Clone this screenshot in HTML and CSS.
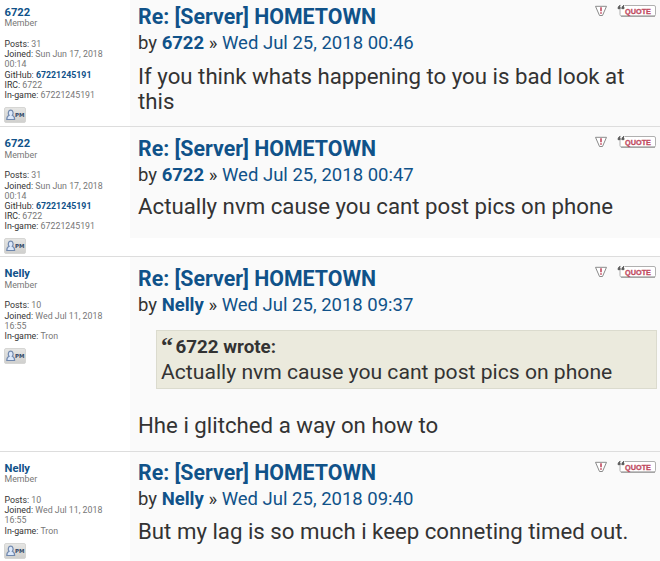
FILE: index.html
```
<!DOCTYPE html>
<html lang="en">
<head>
<meta charset="utf-8">
<title>Topic</title>
<link rel="stylesheet" href="styles.css">
</head>
<body>
<svg class="defs" width="0" height="0" aria-hidden="true">
  <linearGradient id="shade" x1="0" y1="0" x2="0" y2="1"><stop offset="0" stop-color="#e6e6e4"/><stop offset="1" stop-color="#cfcfcd"/></linearGradient>
  <symbol id="pm" viewBox="0 0 22 16">
    <rect x=".5" y=".5" width="21" height="15" rx="1.500" fill="url(#shade)" stroke="#d6d6d4"/>
    <path d="M2.800 12.500c0-2.300.9-3.700 2.300-4.200C3.500 6.500 4.300 3.200 6.700 3.200s3.200 3.300 1.600 5.100c1.400.5 2.300 1.900 2.300 4.200z" fill="#dce8fa" stroke="#7088ae" stroke-width="1.200"/>
  </symbol>
  <symbol id="report" viewBox="0 0 14 12">
    <path d="M1.500 1.300h11L8.500 10.500h-3z" fill="#fff" stroke="#8a8a8a" stroke-linejoin="round"/>
    <path d="M7 2.300v4M7 7.300v1.500" stroke="#c04a60" stroke-width="1.600"/>
  </symbol>
  <symbol id="quote" viewBox="0 0 40 14">
    <rect x="3" y="1.500" width="35.500" height="10.500" rx="1.500" fill="#fff" stroke="#b0b0b0"/>
    <path d="M4 12.200h34" stroke="#909090"/>
    <path d="M0 0h8v5H0z" fill="#fafafa"/>
    <path d="M3.200 1.300C1.700 2 1 3 1 4.700h2.200V3.200h-.8zM7 1.300C5.500 2 4.800 3 4.800 4.700H7V3.200h-.8z" fill="#555" stroke="#555" stroke-width=".8"/>
  </symbol>
</svg>
<main>
  <article class="post p1">
    <aside>
      <a class="user">6722</a><div class="rank">Member</div>
      <div class="facts"><div><b>Posts:</b> 31</div><div><b>Joined:</b> Sun Jun 17, 2018 00:14</div><div><b>GitHub:</b> <a>67221245191</a></div><div><b>IRC:</b> 6722</div><div><b>In-game:</b> 67221245191</div></div>
      <svg class="pm"><use href="#pm"/><text x="11" y="10" class="pm-text">PM</text></svg>
    </aside>
    <section>
      <header><h3>Re: [Server] HOMETOWN</h3><nav><svg class="report"><use href="#report"/></svg><svg class="quote"><use href="#quote"/><text x="8" y="10" class="quote-text" textLength="26" lengthAdjust="spacingAndGlyphs">QUOTE</text></svg></nav></header>
      <p class="author">by <b>6722</b> » <a>Wed Jul 25, 2018 00:46</a></p>
      <p class="content">If you think whats happening to you is bad look at<br>this</p>
    </section>
  </article>
  <article class="post p2">
    <aside>
      <a class="user">6722</a><div class="rank">Member</div>
      <div class="facts"><div><b>Posts:</b> 31</div><div><b>Joined:</b> Sun Jun 17, 2018 00:14</div><div><b>GitHub:</b> <a>67221245191</a></div><div><b>IRC:</b> 6722</div><div><b>In-game:</b> 67221245191</div></div>
      <svg class="pm"><use href="#pm"/><text x="11" y="10" class="pm-text">PM</text></svg>
    </aside>
    <section>
      <header><h3>Re: [Server] HOMETOWN</h3><nav><svg class="report"><use href="#report"/></svg><svg class="quote"><use href="#quote"/><text x="8" y="10" class="quote-text" textLength="26" lengthAdjust="spacingAndGlyphs">QUOTE</text></svg></nav></header>
      <p class="author">by <b>6722</b> » <a>Wed Jul 25, 2018 00:47</a></p>
      <p class="content">Actually nvm cause you cant post pics on phone</p>
    </section>
  </article>
  <article class="post p3">
    <aside>
      <a class="user">Nelly</a><div class="rank">Member</div>
      <div class="facts"><div><b>Posts:</b> 10</div><div><b>Joined:</b> Wed Jul 11, 2018 16:55</div><div><b>In-game:</b> Tron</div></div>
      <svg class="pm"><use href="#pm"/><text x="11" y="10" class="pm-text">PM</text></svg>
    </aside>
    <section>
      <header><h3>Re: [Server] HOMETOWN</h3><nav><svg class="report"><use href="#report"/></svg><svg class="quote"><use href="#quote"/><text x="8" y="10" class="quote-text" textLength="26" lengthAdjust="spacingAndGlyphs">QUOTE</text></svg></nav></header>
      <p class="author">by <b>Nelly</b> » <a>Wed Jul 25, 2018 09:37</a></p>
      <blockquote><cite><span class="mark">“</span>6722 wrote:</cite><p>Actually nvm cause you cant post pics on phone</p></blockquote>
      <p class="content reply">Hhe i glitched a way on how to</p>
    </section>
  </article>
  <article class="post p4">
    <aside>
      <a class="user">Nelly</a><div class="rank">Member</div>
      <div class="facts"><div><b>Posts:</b> 10</div><div><b>Joined:</b> Wed Jul 11, 2018 16:55</div><div><b>In-game:</b> Tron</div></div>
      <svg class="pm"><use href="#pm"/><text x="11" y="10" class="pm-text">PM</text></svg>
    </aside>
    <section>
      <header><h3>Re: [Server] HOMETOWN</h3><nav><svg class="report"><use href="#report"/></svg><svg class="quote"><use href="#quote"/><text x="8" y="10" class="quote-text" textLength="26" lengthAdjust="spacingAndGlyphs">QUOTE</text></svg></nav></header>
      <p class="author">by <b>Nelly</b> » <a>Wed Jul 25, 2018 09:40</a></p>
      <p class="content">But my lag is so much i keep conneting timed out.</p>
    </section>
  </article>
</main>
</body>
</html>
```
FILE: styles.css
```
* { box-sizing: border-box; }
body { margin: 0; background: #fff; color: #333; font-family: Roboto, "Liberation Sans", sans-serif; overflow: hidden; }
.defs { display: block; height: 0; }
h3, p, blockquote { margin: 0; }
a { color: #105289; }
svg { display: block; }
.post { display: grid; grid-template-columns: 130px 1fr; align-items: start; border-bottom: 1px solid #ddd; }
.p1 { height: 127px; }
.p2 { height: 130px; }
.p3 { height: 195px; }
.p4 { height: 109px; border-bottom: 0; }
aside { padding: 7px 0 0 4.5px; color: #777; }
.p2 aside, .p3 aside, .p4 aside { padding-top: 11px; }
.user { display: block; font-size: 11.2px; line-height: 12px; font-weight: 700; }
.rank { font-size: 8.8px; line-height: 9px; }
.p2 .rank, .p3 .rank { padding-top: 1px; }
.facts { width: 118px; padding-right: 12px; margin-top: 11px; font-size: 8.8px; line-height: 10.2px; }
.p2 .facts, .p3 .facts { margin-top: 10.4px; }
.facts b { color: #333; font-weight: 400; }
.facts a { font-weight: 700; }
.pm { width: 22px; height: 16px; margin: 7px 0 0 -.5px; }
.p2 .pm, .p3 .pm { margin-top: 6.6px; }
.pm-text { font: 700 5.5px "DejaVu Sans", sans-serif; fill: #354a66; }
section { height: 100%; background: #fafafa; padding: 4px 3px 0 8px; }
.p2 section, .p3 section, .p4 section { padding-top: 8px; }
.p2 section { height: 111px; }
header { display: flex; justify-content: space-between; height: 26px; }
h3 { margin-top: -1px; font-size: 22.4px; line-height: 26px; font-weight: 700; color: #105289; white-space: nowrap; transform: scaleX(.952); transform-origin: 0 0; }
.p2 h3, .p3 h3 { margin-top: 0; }
nav { display: flex; gap: 9px; }
.report { width: 14px; height: 12px; margin-top: 1px; }
.quote { width: 40px; height: 14px; }
.quote-text { font: 700 8px "Liberation Sans", sans-serif; fill: #c04a60; stroke: #c04a60; stroke-width: .3px; }
.author { margin-top: 1px; font-size: 18.5px; line-height: 24px; white-space: nowrap; }
.p2 .author, .p3 .author { margin-top: 2px; }
.author b { color: #105289; }
.content { margin-top: 9px; font-size: 22.24px; line-height: 25px; white-space: nowrap; }
.p2 .content { margin-top: 7px; }
.p4 .content { margin-top: 8px; }
blockquote { height: 59px; margin: 13px 0 0 18px; padding: 4px 4px; background: #ebeadd; border: 1px solid #dbdbce; }
cite { display: block; font-size: 18.8px; line-height: 25px; font-style: normal; font-weight: 700; }
.mark { display: inline-block; width: 14.5px; font-family: "Liberation Serif", serif; font-size: 24px; line-height: 1px; vertical-align: 0; }
blockquote p { font-size: 21.13px; line-height: 23.5px; white-space: nowrap; }
.p3 .reply { margin-top: 24px; }
```
